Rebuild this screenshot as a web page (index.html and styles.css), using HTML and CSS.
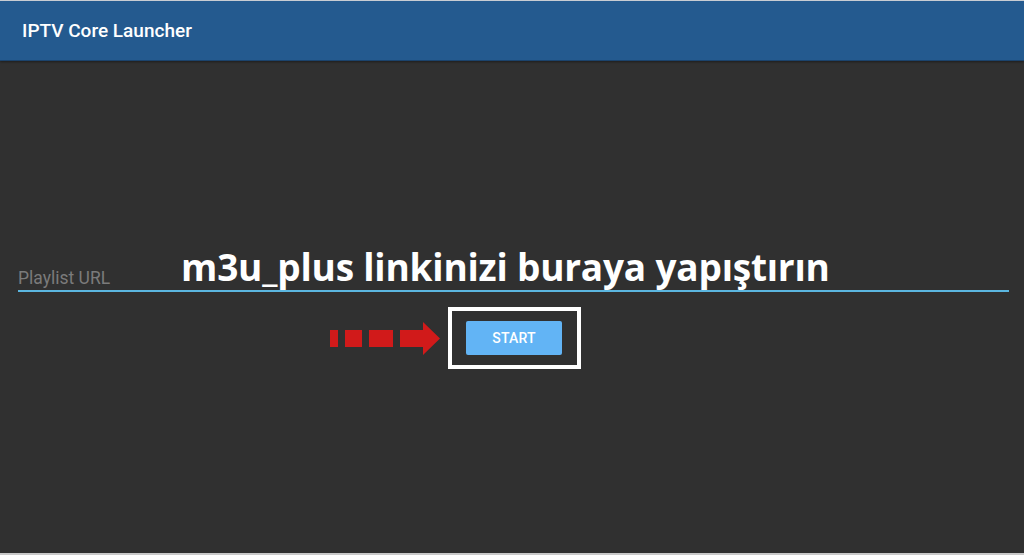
FILE: index.html
```html
<!DOCTYPE html>
<html lang="tr">
<head>
    <meta charset="UTF-8">
    <meta name="viewport" content="width=device-width, initial-scale=1.0">
    <title>IPTV Core Launcher</title>
    <link rel="stylesheet" href="styles.css">
</head>
<body>
    <header class="app-bar">
        <h1 class="app-title">IPTV Core Launcher</h1>
    </header>
    <main class="content">
        <div class="url-field">
            <input type="text" class="url-input" placeholder="Playlist URL">
            <span class="hint">m3u_plus linkinizi buraya yapıştırın</span>
        </div>
        <div class="start-row">
            <div class="start-frame">
                <svg class="arrow" width="112" height="34" viewBox="0 0 112 34">
                    <rect x="2" y="8" width="8" height="17" fill="#d11a1a"/>
                    <rect x="17" y="8" width="17" height="17" fill="#d11a1a"/>
                    <rect x="41" y="8" width="24" height="17" fill="#d11a1a"/>
                    <polygon points="72,8 95,8 95,0 112,16.5 95,33 95,25 72,25" fill="#d11a1a"/>
                </svg>
                <button class="start-button">START</button>
            </div>
        </div>
    </main>
</body>
</html>
```

FILE: styles.css
```css
body {
    margin: 0;
    padding: 0;
    background-color: #303030;
    font-family: Roboto, "Liberation Sans", sans-serif;
    height: 555px;
    border-top: 1px solid #c8ccd2;
    border-bottom: 2px solid #c9c9c9;
    box-sizing: border-box;
    overflow: hidden;
}

.app-bar {
    background-color: #245a8f;
    height: 59px;
    border-bottom: 1px solid #1b436c;
    box-shadow: 0 1px 2px rgba(0, 0, 0, 0.4);
    display: flex;
    align-items: center;
    padding-left: 22px;
}

.app-title {
    margin: 0;
    color: #ffffff;
    font-size: 19px;
    font-weight: 500;
}

.content {
    padding-top: 200px;
}

.url-field {
    position: relative;
    margin: 0 15px 0 18px;
}

.url-input {
    display: block;
    width: 100%;
    box-sizing: border-box;
    height: 31px;
    padding: 4px 0 0 0;
    background: transparent;
    border: none;
    border-bottom: 2px solid #5bb6e0;
    color: #e0e0e0;
    font-family: Roboto, "Liberation Sans", sans-serif;
    font-size: 17.5px;
    outline: none;
}

.url-input::placeholder {
    color: #7b7b7b;
}

.hint {
    position: absolute;
    left: 163px;
    top: -20px;
    color: #ffffff;
    font-family: "Open Sans", sans-serif;
    font-weight: 700;
    font-size: 37px;
    letter-spacing: -0.2px;
    white-space: nowrap;
}

.start-row {
    display: flex;
    justify-content: center;
    margin-top: 15px;
    padding-left: 5px;
}

.start-frame {
    position: relative;
    border: 4px solid #ffffff;
    padding: 10px 15px 10px 14px;
}

.arrow {
    position: absolute;
    right: 137px;
    top: 11px;
}

.start-button {
    display: block;
    width: 96px;
    height: 34px;
    background-color: #62b4f5;
    border: none;
    border-radius: 2px;
    color: #ffffff;
    font-family: Roboto, "Liberation Sans", sans-serif;
    font-size: 14px;
    font-weight: 500;
    letter-spacing: 0.2px;
    cursor: pointer;
}
```
